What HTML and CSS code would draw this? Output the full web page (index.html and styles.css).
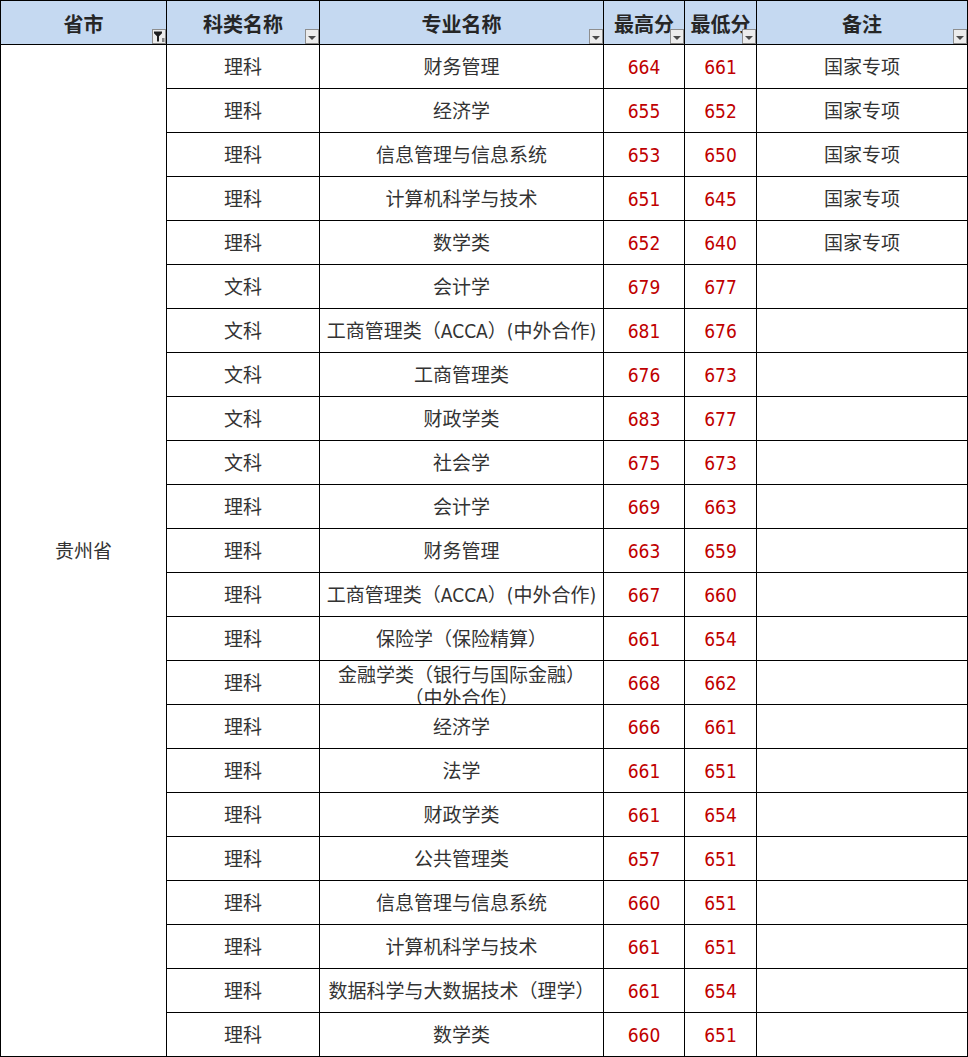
FILE: index.html
```html
<!DOCTYPE html>
<html lang="zh-CN">
<head>
<meta charset="utf-8">
<title>录取分数</title>
<link rel="stylesheet" href="styles.css">
</head>
<body>
<div class="sheet">
  <div class="hd">省市<span class="fbtn"><svg class="funnel" width="12" height="13" viewBox="0 0 12 13"><path d="M1 1.5H9V3.2L6 6.2V11.5H4V6.2L1 3.2Z" fill="#1e1e1e"/><rect x="9" y="8.5" width="2.5" height="1" fill="#1e1e1e"/><rect x="9" y="10.5" width="2.5" height="1" fill="#1e1e1e"/></svg></span></div>
  <div class="hd">科类名称<span class="fbtn"><i class="tri"></i></span></div>
  <div class="hd">专业名称<span class="fbtn"><i class="tri"></i></span></div>
  <div class="hd">最高分<span class="fbtn"><i class="tri"></i></span></div>
  <div class="hd">最低分<span class="fbtn"><i class="tri"></i></span></div>
  <div class="hd">备注<span class="fbtn"><i class="tri"></i></span></div>

  <div class="c prov">贵州省</div>

  <div class="c">理科</div><div class="c">财务管理</div><div class="c n">664</div><div class="c n">661</div><div class="c">国家专项</div>
  <div class="c">理科</div><div class="c">经济学</div><div class="c n">655</div><div class="c n">652</div><div class="c">国家专项</div>
  <div class="c">理科</div><div class="c">信息管理与信息系统</div><div class="c n">653</div><div class="c n">650</div><div class="c">国家专项</div>
  <div class="c">理科</div><div class="c">计算机科学与技术</div><div class="c n">651</div><div class="c n">645</div><div class="c">国家专项</div>
  <div class="c">理科</div><div class="c">数学类</div><div class="c n">652</div><div class="c n">640</div><div class="c">国家专项</div>
  <div class="c">文科</div><div class="c">会计学</div><div class="c n">679</div><div class="c n">677</div><div class="c"></div>
  <div class="c">文科</div><div class="c">工商管理类（ACCA）(中外合作)</div><div class="c n">681</div><div class="c n">676</div><div class="c"></div>
  <div class="c">文科</div><div class="c">工商管理类</div><div class="c n">676</div><div class="c n">673</div><div class="c"></div>
  <div class="c">文科</div><div class="c">财政学类</div><div class="c n">683</div><div class="c n">677</div><div class="c"></div>
  <div class="c">文科</div><div class="c">社会学</div><div class="c n">675</div><div class="c n">673</div><div class="c"></div>
  <div class="c">理科</div><div class="c">会计学</div><div class="c n">669</div><div class="c n">663</div><div class="c"></div>
  <div class="c">理科</div><div class="c">财务管理</div><div class="c n">663</div><div class="c n">659</div><div class="c"></div>
  <div class="c">理科</div><div class="c">工商管理类（ACCA）(中外合作)</div><div class="c n">667</div><div class="c n">660</div><div class="c"></div>
  <div class="c">理科</div><div class="c">保险学（保险精算）</div><div class="c n">661</div><div class="c n">654</div><div class="c"></div>
  <div class="c">理科</div><div class="c wrap">金融学类（银行与国际金融）<br>（中外合作）</div><div class="c n">668</div><div class="c n">662</div><div class="c"></div>
  <div class="c">理科</div><div class="c">经济学</div><div class="c n">666</div><div class="c n">661</div><div class="c"></div>
  <div class="c">理科</div><div class="c">法学</div><div class="c n">661</div><div class="c n">651</div><div class="c"></div>
  <div class="c">理科</div><div class="c">财政学类</div><div class="c n">661</div><div class="c n">654</div><div class="c"></div>
  <div class="c">理科</div><div class="c">公共管理类</div><div class="c n">657</div><div class="c n">651</div><div class="c"></div>
  <div class="c">理科</div><div class="c">信息管理与信息系统</div><div class="c n">660</div><div class="c n">651</div><div class="c"></div>
  <div class="c">理科</div><div class="c">计算机科学与技术</div><div class="c n">661</div><div class="c n">651</div><div class="c"></div>
  <div class="c">理科</div><div class="c">数据科学与大数据技术（理学）</div><div class="c n">661</div><div class="c n">654</div><div class="c"></div>
  <div class="c">理科</div><div class="c">数学类</div><div class="c n">660</div><div class="c n">651</div><div class="c"></div>
</div>
</body>
</html>
```

FILE: styles.css
```css
html, body {
  margin: 0;
  padding: 0;
  background: #ffffff;
}

.sheet {
  display: grid;
  grid-template-columns: 165px 152px 283px 80px 71px 210px;
  grid-auto-rows: 43px;
  gap: 1px;
  padding: 1px;
  width: 968px;
  box-sizing: border-box;
  background: #000000;
  font-family: "DejaVu Sans Condensed", "DejaVu Sans", "Noto Sans CJK SC", sans-serif;
  font-stretch: condensed;
}

.hd {
  position: relative;
  background: #c5d9f1;
  display: flex;
  align-items: center;
  justify-content: center;
  padding-top: 3px;
  box-sizing: border-box;
  font-family: "Noto Sans CJK SC", sans-serif;
  font-weight: bold;
  font-size: 20px;
  color: #262626;
  line-height: 1;
}

.fbtn {
  position: absolute;
  right: 0;
  bottom: 0;
  width: 14px;
  height: 15px;
  box-sizing: border-box;
  background: #ececec;
  border: 1px solid #8e8e8e;
  display: flex;
  align-items: center;
  justify-content: center;
}

.funnel {
  display: block;
}

.tri {
  display: block;
  width: 0;
  height: 0;
  border-left: 4px solid transparent;
  border-right: 4px solid transparent;
  border-top: 4px solid #4a4a4a;
  margin-top: 2px;
}

.c {
  background: #ffffff;
  display: flex;
  align-items: center;
  justify-content: center;
  text-align: center;
  padding-top: 2px;
  box-sizing: border-box;
  font-size: 19px;
  color: #333333;
  line-height: 23px;
  white-space: nowrap;
  overflow: hidden;
}

.prov {
  grid-column: 1;
  grid-row: 2 / span 23;
}

.n {
  color: #c00000;
  font-family: "DejaVu Sans Condensed", "DejaVu Sans", sans-serif;
}

.wrap {
  align-items: flex-start;
  padding-top: 3px;
}
```
